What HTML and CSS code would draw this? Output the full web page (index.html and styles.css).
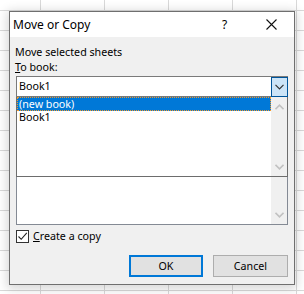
FILE: index.html
```html
<!DOCTYPE html>
<html>
<head>
<meta charset="utf-8">
<link rel="stylesheet" href="styles.css">
</head>
<body>
<div class="dialog">
  <div class="titlebar">
    <span class="title">Move or Copy</span>
    <span class="help">?</span>
    <span class="close"><svg width="11" height="11" viewBox="0 0 11 11"><path d="M0.5 0.5L10.5 10.5M10.5 0.5L0.5 10.5" stroke="#111" stroke-width="1.1" fill="none"/></svg></span>
  </div>
  <div class="content">
    <div class="label">Move selected sheets</div>
    <div class="label"><u>T</u>o book:</div>
    <div class="combo">
      <span class="combo-text">Book1</span>
      <span class="drop"><svg width="9" height="6" viewBox="0 0 9 6"><path d="M0.5 0.8L4.5 4.8L8.5 0.8" stroke="#333" stroke-width="1.2" fill="none"/></svg></span>
    </div>
    <div class="list">
      <div class="items">
        <div class="item sel">(new book)</div>
        <div class="item">Book1</div>
      </div>
      <div class="vscroll">
        <svg width="9" height="6" viewBox="0 0 9 6"><path d="M0.5 5.2L4.5 1.2L8.5 5.2" stroke="#c2c2c2" stroke-width="1.6" fill="none"/></svg>
        <svg width="9" height="6" viewBox="0 0 9 6"><path d="M0.5 0.8L4.5 4.8L8.5 0.8" stroke="#c2c2c2" stroke-width="1.6" fill="none"/></svg>
      </div>
    </div>
    <div class="list list2">
      <div class="items"></div>
      <div class="vscroll end">
        <svg width="9" height="6" viewBox="0 0 9 6"><path d="M0.5 0.8L4.5 4.8L8.5 0.8" stroke="#c2c2c2" stroke-width="1.6" fill="none"/></svg>
      </div>
    </div>
    <div class="check">
      <span class="box"><svg width="11" height="11" viewBox="0 0 11 11"><path d="M1.5 5.5L4.2 8.3L9.8 1.8" stroke="#222" stroke-width="1.1" fill="none"/></svg></span>
      <span class="check-label"><u>C</u>reate a copy</span>
    </div>
    <div class="buttons">
      <button class="btn default">OK</button>
      <button class="btn">Cancel</button>
    </div>
  </div>
</div>
</body>
</html>
```
FILE: styles.css
```css
html, body {
  margin: 0;
  padding: 0;
}
body {
  width: 304px;
  height: 294px;
  overflow: hidden;
  background-color: #fff;
  background-image:
    linear-gradient(to bottom, #d9d9d9 1px, transparent 1px),
    linear-gradient(to right, #d9d9d9 1px, transparent 1px);
  background-size: 64px 20px;
  background-position: 40px 10px;
  font-family: "Segoe UI", "Noto Sans", "DejaVu Sans", sans-serif;
  color: #000;
}
.dialog {
  box-sizing: border-box;
  margin: 11px 0 0 9px;
  width: 286px;
  height: 274px;
  border: 1px solid #6f6f6f;
  background: #f0f0f0;
  box-shadow: 0 2px 10px 2px rgba(0,0,0,0.16);
  display: flex;
  flex-direction: column;
}
.titlebar {
  height: 25px;
  background: #fff;
  display: flex;
  align-items: center;
  font-size: 12px;
}
.title {
  padding-left: 3px;
  flex: 1;
  padding-bottom: 1px;
}
.help {
  width: 14px;
  font-size: 12px;
  margin-right: 30px;
  padding-bottom: 1px;
}
.close {
  display: flex;
  width: 11px;
  margin-right: 17px;
}
.content {
  padding: 8px 6px 0 6px;
  display: flex;
  flex-direction: column;
  font-size: 10.7px;
}
.label {
  line-height: 15px;
  height: 15px;
  margin-left: -1px;
}
.combo {
  box-sizing: border-box;
  margin-top: 1px;
  height: 21px;
  border: 1px solid #7a7a7a;
  background: #fff;
  display: flex;
  align-items: stretch;
}
.combo-text {
  flex: 1;
  padding-left: 2px;
  line-height: 18px;
}
.drop {
  box-sizing: border-box;
  width: 17px;
  margin: 0 -1px -1px 0;
  border: 1px solid #005499;
  background: #cce4f7;
  display: flex;
  align-items: center;
  justify-content: center;
}
.list {
  box-sizing: border-box;
  height: 80px;
  border: 1px solid #6d6d6d;
  border-top: none;
  background: #fff;
  display: flex;
}
.list2 {
  height: 48px;
  border-color: #848a94;
  border-top: none;
}
.items {
  flex: 1;
  display: flex;
  flex-direction: column;
}
.item {
  height: 13px;
  line-height: 13px;
  padding-left: 2px;
  overflow: hidden;
  white-space: nowrap;
}
.item.sel {
  background: #0078d7;
  color: #fff;
  outline: 1px dotted #f59a2a;
  outline-offset: -1px;
  height: 14px;
  line-height: 14px;
}
.vscroll {
  width: 16px;
  background: #f0f0f0;
  display: flex;
  flex-direction: column;
  justify-content: space-between;
  align-items: center;
  padding: 7px 0 6px;
}
.vscroll.end {
  justify-content: flex-end;
}
.check {
  margin-top: 4px;
  height: 14px;
  display: flex;
  align-items: center;
}
.box {
  box-sizing: border-box;
  width: 13px;
  height: 13px;
  border: 1px solid #333;
  background: #fff;
  display: flex;
  align-items: center;
  justify-content: center;
}
.check-label {
  margin-left: 4px;
  line-height: 14px;
}
.buttons {
  margin-top: 12px;
  display: flex;
  justify-content: flex-end;
  gap: 10px;
}
.btn {
  box-sizing: border-box;
  width: 75px;
  height: 22px;
  border: 1px solid #adadad;
  background: #e1e1e1;
  font-family: inherit;
  font-size: 10.7px;
  color: #000;
  padding: 0;
  margin: 0;
}
.btn.default {
  border: 2px solid #0078d7;
  width: 74px;
}
```
